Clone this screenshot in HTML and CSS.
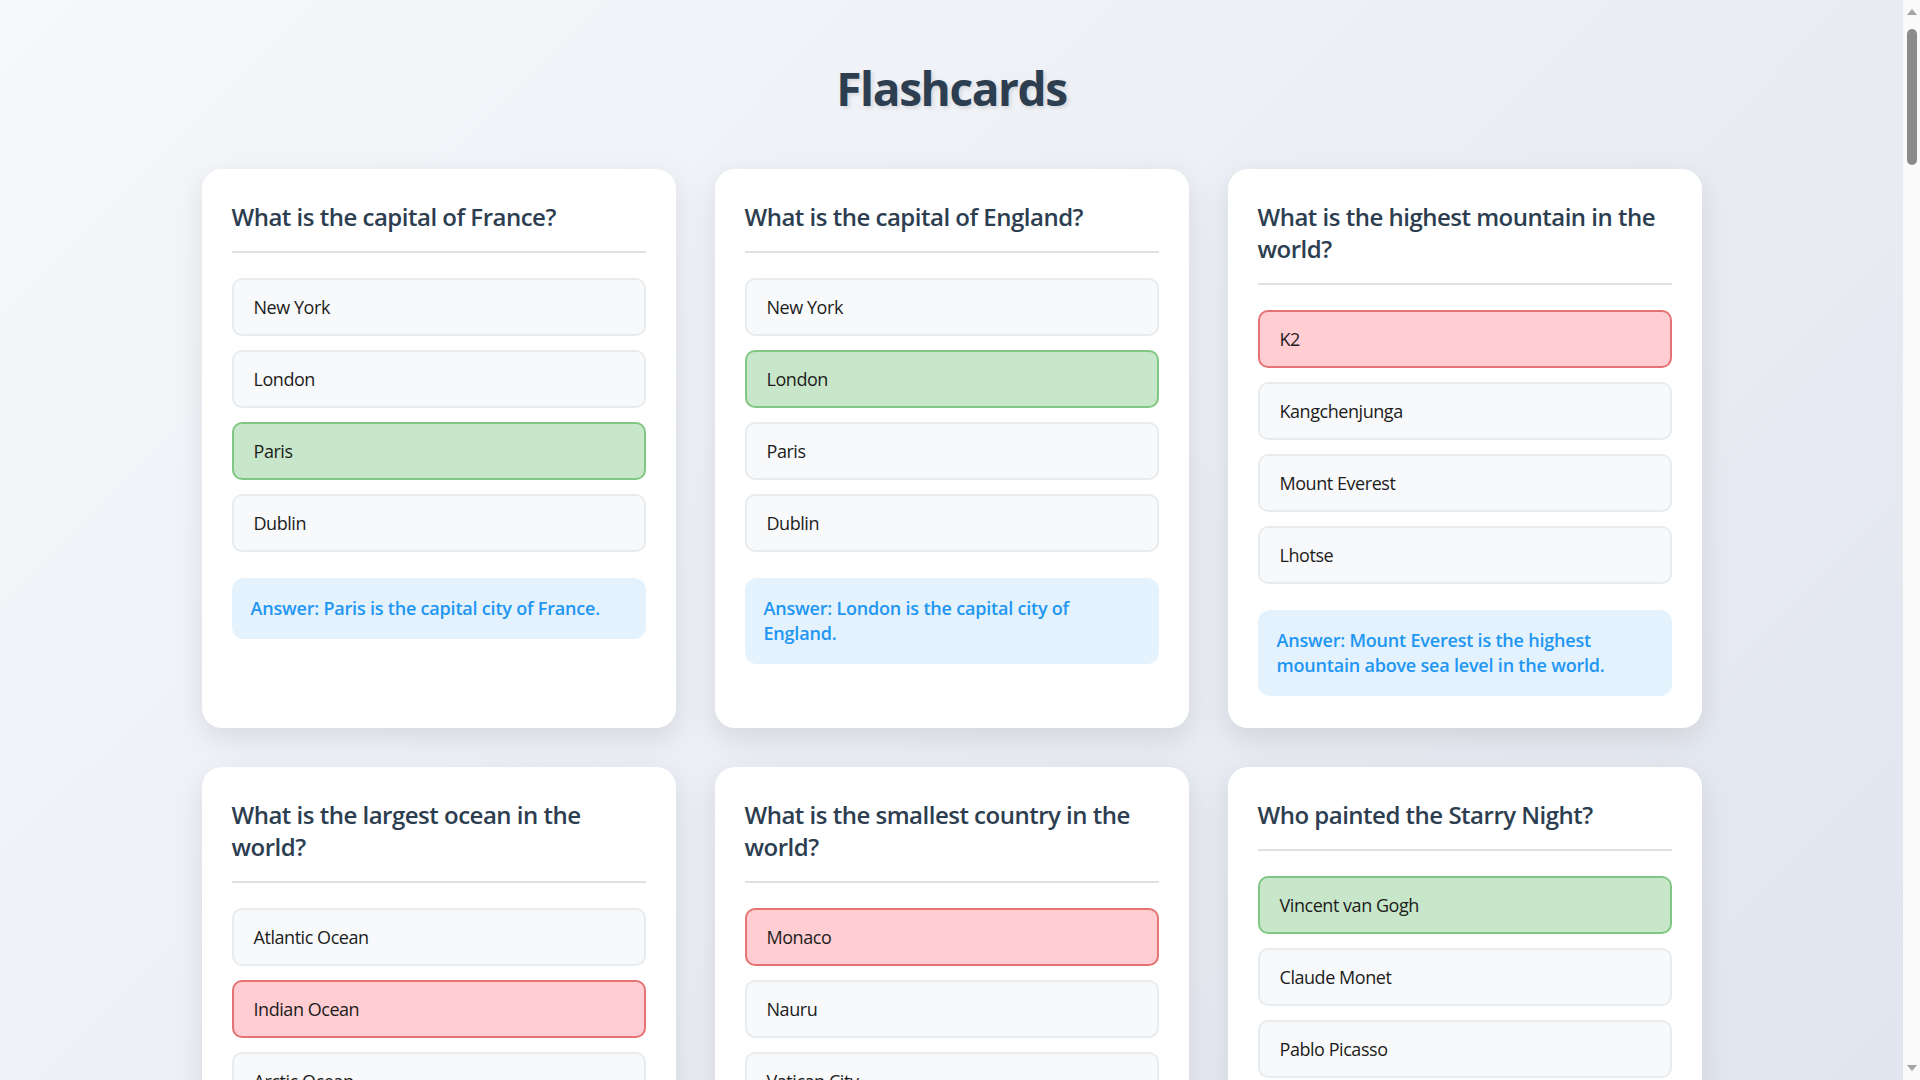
FILE: index.html
```html
<!DOCTYPE html>
<html lang="en">
<head>
<meta charset="UTF-8">
<title>Flashcards</title>
<link rel="stylesheet" href="styles.css">
</head>
<body>
<div class="container">
  <h1 class="page-title">Flashcards</h1>
  <div class="grid">
    <div class="card">
      <h3 class="question">What is the capital of France?</h3>
      <div class="options">
        <div class="option">New York</div>
        <div class="option">London</div>
        <div class="option correct">Paris</div>
        <div class="option">Dublin</div>
      </div>
      <div class="answer">Answer: Paris is the capital city of France.</div>
    </div>
    <div class="card">
      <h3 class="question">What is the capital of England?</h3>
      <div class="options">
        <div class="option">New York</div>
        <div class="option correct">London</div>
        <div class="option">Paris</div>
        <div class="option">Dublin</div>
      </div>
      <div class="answer">Answer: London is the capital city of England.</div>
    </div>
    <div class="card">
      <h3 class="question">What is the highest mountain in the world?</h3>
      <div class="options">
        <div class="option wrong">K2</div>
        <div class="option">Kangchenjunga</div>
        <div class="option">Mount Everest</div>
        <div class="option">Lhotse</div>
      </div>
      <div class="answer">Answer: Mount Everest is the highest mountain above sea level in the world.</div>
    </div>
    <div class="card">
      <h3 class="question">What is the largest ocean in the world?</h3>
      <div class="options">
        <div class="option">Atlantic Ocean</div>
        <div class="option wrong">Indian Ocean</div>
        <div class="option">Arctic Ocean</div>
        <div class="option">Pacific Ocean</div>
      </div>
      <div class="answer">Answer: The Pacific Ocean is the largest and deepest ocean in the world.</div>
    </div>
    <div class="card">
      <h3 class="question">What is the smallest country in the world?</h3>
      <div class="options">
        <div class="option wrong">Monaco</div>
        <div class="option">Nauru</div>
        <div class="option">Vatican City</div>
        <div class="option">San Marino</div>
      </div>
      <div class="answer">Answer: Vatican City is the smallest country in the world.</div>
    </div>
    <div class="card">
      <h3 class="question">Who painted the Starry Night?</h3>
      <div class="options">
        <div class="option correct">Vincent van Gogh</div>
        <div class="option">Claude Monet</div>
        <div class="option">Pablo Picasso</div>
        <div class="option">Leonardo da Vinci</div>
      </div>
      <div class="answer">Answer: Vincent van Gogh painted The Starry Night in 1889.</div>
    </div>
    <div class="card">
      <h3 class="question">What is the chemical symbol for gold?</h3>
      <div class="options">
        <div class="option">Ag</div>
        <div class="option">Au</div>
        <div class="option">Gd</div>
        <div class="option">Go</div>
      </div>
      <div class="answer">Answer: Au is the chemical symbol for gold.</div>
    </div>
    <div class="card">
      <h3 class="question">How many continents are there?</h3>
      <div class="options">
        <div class="option">5</div>
        <div class="option">6</div>
        <div class="option">7</div>
        <div class="option">8</div>
      </div>
      <div class="answer">Answer: There are 7 continents on Earth.</div>
    </div>
    <div class="card">
      <h3 class="question">What is the largest planet in our solar system?</h3>
      <div class="options">
        <div class="option">Earth</div>
        <div class="option">Saturn</div>
        <div class="option">Jupiter</div>
        <div class="option">Neptune</div>
      </div>
      <div class="answer">Answer: Jupiter is the largest planet in our solar system.</div>
    </div>
    <div class="card">
      <h3 class="question">Who wrote Romeo and Juliet?</h3>
      <div class="options">
        <div class="option">Charles Dickens</div>
        <div class="option">William Shakespeare</div>
        <div class="option">Jane Austen</div>
        <div class="option">Mark Twain</div>
      </div>
      <div class="answer">Answer: William Shakespeare wrote Romeo and Juliet.</div>
    </div>
    <div class="card">
      <h3 class="question">What is the longest river in the world?</h3>
      <div class="options">
        <div class="option">Amazon</div>
        <div class="option">Nile</div>
        <div class="option">Yangtze</div>
        <div class="option">Mississippi</div>
      </div>
      <div class="answer">Answer: The Nile is generally regarded as the longest river in the world.</div>
    </div>
    <div class="card">
      <h3 class="question">What is the boiling point of water at sea level?</h3>
      <div class="options">
        <div class="option">90°C</div>
        <div class="option">100°C</div>
        <div class="option">110°C</div>
        <div class="option">120°C</div>
      </div>
      <div class="answer">Answer: Water boils at 100°C at sea level.</div>
    </div>
  </div>
</div>
<div class="scrollbar" aria-hidden="true">
  <span class="sb-arrow sb-up"></span>
  <span class="sb-thumb"></span>
  <span class="sb-arrow sb-down"></span>
</div>
</body>
</html>
```

FILE: styles.css
```css
html {
  background: #f6f8fb;
}

body {
  margin: 0;
  padding-right: 17px;
  min-height: 100vh;
  font-family: "Segoe UI", "Open Sans", sans-serif;
  background: linear-gradient(135deg, #f6f8fb 0%, #e1e5ee 100%) fixed;
  color: #212529;
}

.container {
  max-width: 1500px;
  margin: 0 auto;
  padding: 56px 0 60px;
}

.page-title {
  margin: 0 0 49px;
  text-align: center;
  font-size: 46px;
  line-height: 64px;
  font-weight: 700;
  letter-spacing: -1.4px;
  color: #2c3e50;
  text-shadow: 2px 2px 4px rgba(0, 0, 0, 0.12);
}

.grid {
  display: grid;
  grid-template-columns: repeat(3, 1fr);
  gap: 39px;
}

.card {
  background: #ffffff;
  border-radius: 20px;
  padding: 30px 30px 32px;
  box-shadow: 0 10px 30px rgba(0, 0, 0, 0.1);
}

.question {
  margin: 0 0 25px;
  padding: 2px 0 18px;
  border-bottom: 2px solid #e0e0e0;
  font-size: 24px;
  line-height: 32px;
  font-weight: 600;
  letter-spacing: -0.5px;
  color: #2c3e50;
}

.option {
  margin-bottom: 14px;
  padding: 15px 20px;
  font-size: 18px;
  line-height: 24px;
  letter-spacing: -0.45px;
  background: #f8f9fa;
  border: 2px solid #e9ecef;
  border-radius: 10px;
  color: #1c1c1c;
}

.option.correct {
  background: #c8e6c9;
  border-color: #81c784;
}

.option.wrong {
  background: #ffcdd2;
  border-color: #e57373;
}

.answer {
  margin-top: 26px;
  padding: 18px 19px;
  background: #e3f2fd;
  color: #2196f3;
  border-radius: 12px;
  font-size: 18px;
  line-height: 25px;
  font-weight: 600;
  letter-spacing: -0.2px;
}

.scrollbar {
  position: fixed;
  top: 0;
  right: 0;
  width: 17px;
  height: 100vh;
  background: #fafafa;
  display: flex;
  flex-direction: column;
  align-items: center;
}

.sb-arrow {
  width: 0;
  height: 0;
  border-left: 5px solid transparent;
  border-right: 5px solid transparent;
}

.sb-up {
  margin-top: 9px;
  border-bottom: 6px solid #a3a3a3;
}

.sb-down {
  margin-top: auto;
  margin-bottom: 9px;
  border-top: 6px solid #a3a3a3;
}

.sb-thumb {
  width: 10px;
  height: 136px;
  margin-top: 14px;
  margin-left: 1px;
  border-radius: 5px;
  background: #8b8b8b;
}
```
